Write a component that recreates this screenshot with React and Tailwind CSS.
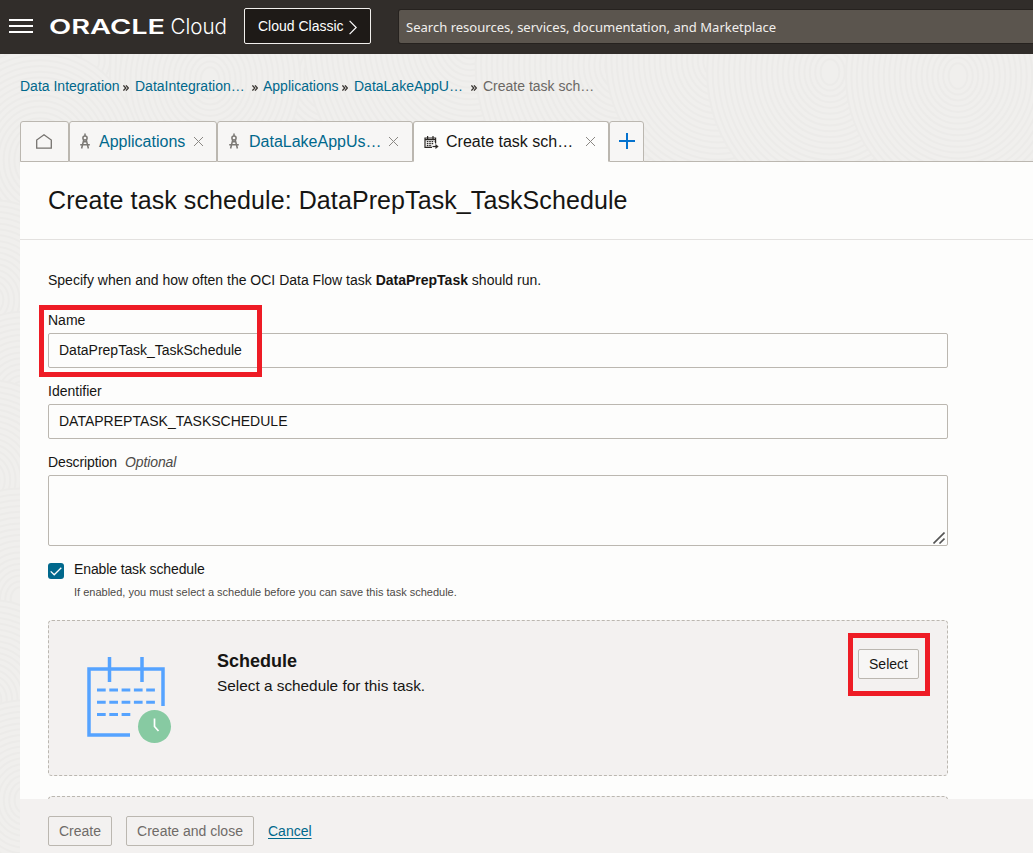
import React from "react";

const tabBase = "flex h-[41px] shrink-0 items-center rounded-t-[3px] border border-[#bbb7b0]";

const swirls = [
  [180, 250, 70], [560, 200, 60], [700, 190, 60], [900, 210, 60], [90, 60, 40], [330, 75, 40], [470, 40, 30],
  [620, 65, 26], [718, 60, 20], [1020, 60, 22], [830, 72, 22], [958, 76, 20], [210, 80, 16], [40, 160, 18],
  [-6, 300, 16], [22, 400, 14], [-10, 480, 16], [20, 600, 18], [-8, 700, 16], [24, 800, 16],
];

function Grain() {
  return (
    <svg className="absolute inset-0 -z-10" width="1033" height="853" fill="#f0efed" stroke="#ecebe9" strokeWidth="2">
      {swirls.map(([x, y, n]) =>
        Array.from({ length: n }, (_, i) => (
          <ellipse key={x + "-" + y + "-" + i} cx={x} cy={y} rx={4 + (n - i) * 5.4} ry={7 + (n - i) * 5.8} />
        ))
      )}
    </svg>
  );
}

function CloseIcon() {
  return (
    <svg width="11" height="11" viewBox="0 0 11 11" fill="none" stroke="#8b8884" strokeWidth="1" className="shrink-0">
      <path d="M1 1l9 9M10 1l-9 9" />
    </svg>
  );
}

function CompassIcon() {
  return (
    <svg width="10" height="17" viewBox="0 0 10 17" fill="none" stroke="#7b7874" strokeWidth="1.5" className="shrink-0">
      <path d="M5 0.5V3" />
      <circle cx="5" cy="5" r="2.1" />
      <path d="M3.8 6.6L2.6 11.5 1.6 15.5M6.2 6.6L7.4 11.5 8.4 15.5M0.2 11.8h9.6M3 8.7h4" />
    </svg>
  );
}

function TaskIcon() {
  return (
    <svg width="15" height="13" viewBox="0 0 15 13" fill="none" stroke="#2a2724" strokeWidth="1.2" className="mt-px shrink-0">
      <path d="M8 11.4H1V2h10.6v5.4M1 3.6h10.6M3.6 0v3M9 0v3" />
      <path d="M2.8 5.7h7.6M2.8 7.7h6.4M2.8 9.6h5" strokeDasharray="1.6 0.8" />
      <path d="M8.5 10.5h4" />
      <path d="M11.6 8.3l2.8 2.2-2.8 2.2z" fill="#2a2724" strokeWidth="0.3" />
    </svg>
  );
}

function Chevrons() {
  return (
    <svg width="6" height="6" viewBox="0 0 6 6" fill="none" stroke="#3a3632" strokeWidth="1.3" className="mt-[3px] shrink-0">
      <path d="M0.4 0.4L2.8 3 0.4 5.6M3 0.4L5.4 3 3 5.6" />
    </svg>
  );
}

function Header() {
  return (
    <header className="flex h-[54px] w-full shrink-0 bg-[#312d2a]">
      <svg width="24" height="14" viewBox="0 0 24 14" className="mt-[19px] ml-[9px] shrink-0" fill="#fff">
        <rect width="24" height="2" />
        <rect y="6" width="24" height="2" />
        <rect y="12" width="24" height="2" />
      </svg>
      <svg width="180" height="40" viewBox="0 0 180 40" className="mt-[6px] ml-[16px] shrink-0" fill="#fff" aria-label="ORACLE Cloud">
        <text x="0" y="28" fontFamily="Inter, sans-serif" fontWeight="600" fontSize="20.5" textLength="116" lengthAdjust="spacingAndGlyphs">ORACLE</text>
        <text x="121.5" y="28" fontFamily="'Inter', sans-serif" fontWeight="300" fontSize="21.3" textLength="56.5" lengthAdjust="spacingAndGlyphs">Cloud</text>
      </svg>
      <div className="mt-[8px] ml-[15px] flex h-[36px] w-[127px] shrink-0 items-center rounded-[2px] border border-[#f1efed] bg-[#1e1a17] pl-[13px] text-[14px] text-white">
        <span className="mt-px whitespace-nowrap">Cloud Classic</span>
        <svg width="8" height="15" viewBox="0 0 8 15" fill="none" stroke="#fff" strokeWidth="1.2" className="mt-[2px] ml-[5px]">
          <path d="M0.6 0.8L7.2 7.5 0.6 14.2" />
        </svg>
      </div>
      <div className="mt-[10px] ml-[28px] flex h-[33px] flex-1 items-center rounded-l-[2px] bg-[#5b554e] pl-[7px] font-['Noto_Sans',sans-serif] text-[13.04px] text-[#f1efed] shadow-[0_0_0_1px_#26221f]">
        <span className="mt-[2px] whitespace-nowrap">Search resources, services, documentation, and Marketplace</span>
      </div>
    </header>
  );
}

function Breadcrumbs() {
  const link = "whitespace-nowrap shrink-0";
  return (
    <nav className="mt-[22px] ml-[20px] flex h-[20px] items-center text-[14px] text-[#00688c]">
      <span className={link + " w-[103px]"}>Data Integration</span>
      <Chevrons />
      <span className={link + " ml-[6px] w-[117px]"}>DataIntegration…</span>
      <Chevrons />
      <span className={link + " ml-[5px] w-[79px]"}>Applications</span>
      <Chevrons />
      <span className={link + " ml-[6px] w-[117px]"}>DataLakeAppU…</span>
      <Chevrons />
      <span className={link + " ml-[6px] text-[#6b6865]"}>Create task sch…</span>
    </nav>
  );
}

function Tabs() {
  return (
    <div className="mt-[25px] ml-[20px] flex h-[41px] text-[16px] text-[#00688c]">
      <div className={tabBase + " w-[49px] bg-[#f7f6f5] pl-[15px]"}>
        <svg width="16" height="15" viewBox="0 0 16 15" fill="none" stroke="#76736f" strokeWidth="1.3" className="mb-px">
          <path d="M0.7 14.2V6L8 0.8 15.3 6v8.2z" />
        </svg>
      </div>
      <div className={tabBase + " w-[148px] bg-[#f7f6f5] pl-[10px]"}>
        <CompassIcon />
        <span className="ml-[9px] w-[94px] whitespace-nowrap">Applications</span>
        <CloseIcon />
      </div>
      <div className={tabBase + " w-[196px] bg-[#f7f6f5] pl-[11px]"}>
        <CompassIcon />
        <span className="ml-[10px] w-[139px] whitespace-nowrap">DataLakeAppUs…</span>
        <CloseIcon />
      </div>
      <div className={tabBase + " w-[196px] border-b-[#fdfdfc] bg-[#fdfdfc] pl-[10px] text-[#161513]"}>
        <TaskIcon />
        <span className="ml-[7px] w-[139px] whitespace-nowrap">Create task sch…</span>
        <CloseIcon />
      </div>
      <div className={tabBase + " w-[35px] justify-center bg-[#f7f6f5] pb-px"}>
        <svg width="16" height="16" viewBox="0 0 16 16" stroke="#0572ce" strokeWidth="2">
          <path d="M8 0v16M0 8h16" />
        </svg>
      </div>
      <div className="flex-1 border-b border-[#bbb7b0]" />
    </div>
  );
}

function Calendar() {
  return (
    <svg width="86" height="90" viewBox="0 0 86 90" fill="none" stroke="#55a3ff" strokeWidth="3.5" className="mt-[34px] ml-[37px] shrink-0">
      <path d="M44 80H3V14h74v37M23.5 2v25M56 2v25" />
      <path d="M11 35h58M11 47.3h58M11 59.5h34" strokeDasharray="8.7 3.6" strokeWidth="3" />
      <circle cx="68.5" cy="71.5" r="16.5" fill="#87caa2" stroke="none" />
      <path d="M68.5 63.5v8l4 4.5" stroke="#fff" strokeWidth="1.7" />
    </svg>
  );
}

export default function App() {
  const label = "h-[20px] text-[14px] leading-[20px]";
  const field = "h-[35px] w-[900px] rounded-[2px] border border-[#bbb7b0] pl-[10px] text-[14px] leading-[32px]";
  return (
    <div className="relative isolate flex h-[853px] w-[1033px] flex-col overflow-hidden bg-[#f0efed] font-['Liberation_Sans',Arial,sans-serif] text-[#161513]">
      <Grain />
      <Header />
      <Breadcrumbs />
      <Tabs />
      <main className="ml-[20px] flex min-h-0 flex-1 flex-col bg-[#fdfdfc]">
        <h1 className="h-[78px] shrink-0 border-b border-[#e3e1df] pl-[28px] text-[25px] leading-[77px] tracking-[0.09px] whitespace-nowrap">
          <span>Create task schedule: DataPrepTask_TaskSchedule</span>
        </h1>
        <div className="flex min-h-0 flex-1 flex-col overflow-hidden pt-[30px] pl-[28px]">
          <p className="h-[20px] shrink-0 text-[14px] leading-[20px]">
            Specify when and how often the OCI Data Flow task <b>DataPrepTask</b> should run.
          </p>
          <section className="relative mt-[20px] shrink-0">
            <div className={label}>Name</div>
            <div className={field + " mt-[3px]"}>DataPrepTask_TaskSchedule</div>
            <div className="absolute -top-[5px] -left-[9px] h-[72px] w-[223px] border-[5px] border-[#ee1c25]" />
          </section>
          <section className="mt-[13px] shrink-0">
            <div className={label}>Identifier</div>
            <div className={field + " mt-[3px]"}>DATAPREPTASK_TASKSCHEDULE</div>
          </section>
          <section className="mt-[13px] shrink-0">
            <div className={label + " tracking-[-0.1px]"}>
              Description<i className="ml-[8px] text-[#4d4a47]">Optional</i>
            </div>
            <div className="mt-[3px] flex h-[71px] w-[900px] items-end justify-end rounded-[2px] border border-[#bbb7b0] pr-[2px] pb-[1px]">
              <svg width="12" height="12" viewBox="0 0 12 12" stroke="#555" strokeWidth="1.6">
                <path d="M0.5 11.5l11-11M6.5 11.5l5-5" />
              </svg>
            </div>
          </section>
          <section className="mt-[13px] flex shrink-0">
            <div className="mt-[4px] flex h-4 w-4 items-center justify-center rounded-[3px] bg-[#00688c]">
              <svg width="12" height="9" viewBox="0 0 12 9" fill="none" stroke="#fff" strokeWidth="1.3">
                <path d="M0.7 4.4L4.2 7.8 11.3 0.7" />
              </svg>
            </div>
            <div className="ml-[10px]">
              <div className={label + " tracking-[-0.12px]"}>Enable task schedule</div>
              <div className="mt-[4px] h-[18px] text-[11px] leading-[18px] text-[#4d4a47]">If enabled, you must select a schedule before you can save this task schedule.</div>
            </div>
          </section>
          <section className="mt-[19px] flex h-[156px] w-[900px] shrink-0 rounded-[4px] border border-dashed border-[#bbb7b0] bg-[#f3f1f0]">
            <Calendar />
            <div className="mt-[28px] ml-[45px] flex-1">
              <h2 className="h-[24px] text-[18px] leading-[24px] font-bold">
                <span>Schedule</span>
              </h2>
              <p className="mt-[3px] text-[15.35px] leading-[20px]">Select a schedule for this task.</p>
            </div>
            <div className="mt-[12px] mr-[17px] flex h-[63px] w-[82px] border-[5px] border-[#ee1c25] pt-[11px] pl-[5px]">
              <div className="h-[30px] w-[61px] rounded-[2px] border border-[#bbb7b0] bg-[#f7f6f5] text-center text-[14px] leading-[28px]">Select</div>
            </div>
          </section>
          <section className="mt-[20px] h-[156px] w-[900px] shrink-0 rounded-[4px] border border-dashed border-[#bbb7b0] bg-[#f3f1f0]" />
        </div>
        <footer className="flex h-[54px] shrink-0 bg-[#f3f1f0] pt-[17px] pl-[28px] text-[14px] leading-[28px] whitespace-nowrap">
          <div className="h-[30px] w-[64px] rounded-[2px] border border-[#bbb7b0] text-center text-[#6f6b68]">Create</div>
          <div className="ml-[14px] h-[30px] w-[128px] rounded-[2px] border border-[#bbb7b0] text-center text-[#6f6b68]">Create and close</div>
          <span className="ml-[14px] pt-px text-[#00688c] underline underline-offset-2">Cancel</span>
        </footer>
      </main>
    </div>
  );
}
